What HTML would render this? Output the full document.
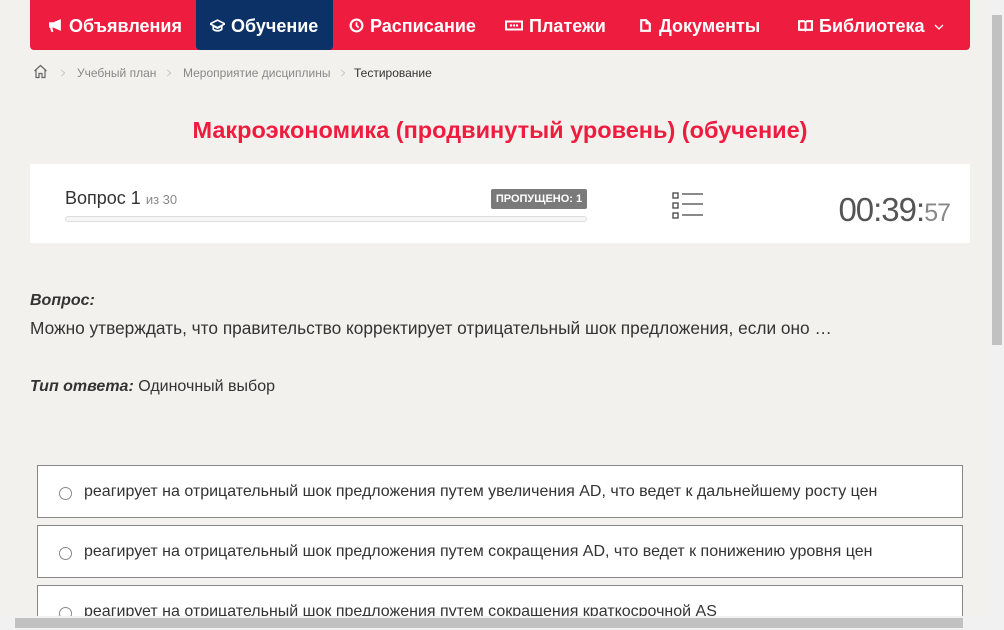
<!DOCTYPE html>
<html><head><meta charset="utf-8"><style>
*{margin:0;padding:0;box-sizing:border-box}
html,body{width:1004px;height:630px;overflow:hidden}
body{background:#f2f1ee;font-family:"Liberation Sans",sans-serif;position:relative;color:#333}
.nav{position:absolute;left:30px;top:0;width:940px;height:50px;background:#ee1c3f;border-radius:0 0 4px 4px}
.it{position:absolute;top:0;height:50px;line-height:52px;color:#fff;font-weight:bold;font-size:18px;white-space:nowrap}
.act{background:#0b3166;border-radius:0 0 4px 4px}
.ic{display:inline-block;width:15px;height:15px;margin-right:6px;vertical-align:-1px}
.bc{position:absolute;top:66px;font-size:12px;color:#888}
.ch{position:absolute;top:63px;font-size:17px;color:#bbb;font-family:"DejaVu Sans",sans-serif;font-weight:200}
.t{position:absolute;left:0;width:1000px;top:117px;text-align:center;color:#ee1c3f;font-weight:bold;font-size:23.5px}
.card{position:absolute;left:30px;top:164px;width:940px;height:79px;background:#fff}
.opt{position:absolute;left:37px;width:926px;height:53px;background:#fff;border:1px solid #888;font-size:16px;color:#333}
.opt span{position:absolute;left:46px;top:17px}
.opt i{position:absolute;left:21px;top:21px;width:13px;height:13px;border:1px solid #888;border-radius:50%}
</style></head><body>
<div class="nav">
<div class="it" style="left:18px"><svg class="ic" viewBox="0 0 14 14"><path d="M1 4h4l7-3v11L5 9H4l1 4H3L2 9H1z" fill="#fff"/></svg>Объявления</div>
<div class="it act" style="left:166px;width:137px;padding-left:14px"><svg class="ic" viewBox="0 0 14 14"><path d="M7 2 0 5.5 7 9l7-3.5zM3 7.5v3c2 2 6 2 8 0v-3L7 9.5z" fill="none" stroke="#fff" stroke-width="1.5"/></svg>Обучение</div>
<div class="it" style="left:319px"><svg class="ic" viewBox="0 0 14 14"><circle cx="7" cy="7" r="5.5" fill="none" stroke="#fff" stroke-width="2"/><path d="M7 4v3l2 2" stroke="#fff" stroke-width="1.6" fill="none"/></svg>Расписание</div>
<div class="it" style="left:475px"><svg class="ic" style="width:18px" viewBox="0 0 18 14"><rect x="0" y="2" width="18" height="10" fill="#fff"/><rect x="2" y="4" width="14" height="6" fill="#ee1c3f"/><circle cx="6" cy="7" r="1.2" fill="#fff"/><circle cx="9" cy="7" r="1.2" fill="#fff"/><circle cx="12" cy="7" r="1.2" fill="#fff"/></svg>Платежи</div>
<div class="it" style="left:608px"><svg class="ic" viewBox="0 0 14 14"><path d="M2 1h6l4 4v8H2z" fill="#fff"/><path d="M4 3h3v3h3v5H4z" fill="#ee1c3f"/></svg>Документы</div>
<div class="it" style="left:768px"><svg class="ic" viewBox="0 0 14 14"><path d="M0 2h6l1 1 1-1h6v10H8l-1 1-1-1H0z" fill="#fff"/><path d="M2 4h4v6H2zM8 4h4v6H8z" fill="#ee1c3f"/></svg>Библиотека <svg width="10" height="8" viewBox="0 0 10 8" style="margin-left:4px;vertical-align:1px"><path d="M1 2l4 4 4-4" fill="none" stroke="#fff" stroke-width="1.3"/></svg></div>
</div>
<svg style="position:absolute;left:33px;top:64px" width="15" height="15" viewBox="0 0 15 15"><path d="M1.5 7 7.5 1.5 13.5 7M3 6v7.5h3v-4h3v4h3V6" fill="none" stroke="#666" stroke-width="1.2"/></svg>
<div class="ch" style="left:60px">›</div><div class="bc" style="left:77px">Учебный план</div>
<div class="ch" style="left:166px">›</div><div class="bc" style="left:183px">Мероприятие дисциплины</div>
<div class="ch" style="left:340px">›</div><div class="bc" style="left:354px;color:#333">Тестирование</div>
<div class="t">Макроэкономика (продвинутый уровень) (обучение)</div>
<div class="card">
<div style="position:absolute;left:35px;top:24px;font-size:18px;color:#333">Вопрос 1 <span style="font-size:13px;color:#888">из 30</span></div>
<div style="position:absolute;left:461px;top:25px;width:96px;height:20px;background:#7a7a7a;color:#fff;font-size:11px;font-weight:bold;line-height:20px;text-align:center;border-radius:2px">ПРОПУЩЕНО: 1</div>
<div style="position:absolute;left:35px;top:52px;width:522px;height:6px;border:1px solid #ddd;border-radius:3px;background:#f6f6f6"></div>
<svg style="position:absolute;left:642px;top:28px" width="32" height="28" viewBox="0 0 32 28"><g fill="none" stroke="#444" stroke-width="1.3"><rect x="1" y="1" width="5" height="5"/><rect x="1" y="11" width="5" height="5"/><rect x="1" y="21" width="5" height="5"/><path d="M10 2h21M10 12h21M10 23h21"/></g></svg>
<div style="position:absolute;right:20px;top:27px;font-size:33px;color:#555;letter-spacing:-1px">00:39:<span style="font-size:25px;color:#888">57</span></div>
</div>
<div style="position:absolute;left:30px;top:292px;font-size:16px;font-weight:bold;font-style:italic">Вопрос:</div>
<div style="position:absolute;left:30px;top:318px;font-size:17.3px">Можно утверждать, что правительство корректирует отрицательный шок предложения, если оно …</div>
<div style="position:absolute;left:30px;top:378px;font-size:16px"><b><i>Тип ответа:</i></b> Одиночный выбор</div>
<div class="opt" style="top:465px"><i></i><span>реагирует на отрицательный шок предложения путем увеличения AD, что ведет к дальнейшему росту цен</span></div>
<div class="opt" style="top:525px"><i></i><span>реагирует на отрицательный шок предложения путем сокращения AD, что ведет к понижению уровня цен</span></div>
<div class="opt" style="top:585px"><i></i><span>реагирует на отрицательный шок предложения путем сокращения краткосрочной AS</span></div>
<div style="position:absolute;left:990px;top:0;width:14px;height:630px;background:#f1f1f1"></div>
<div style="position:absolute;left:992px;top:15px;width:10px;height:330px;background:#c1c1c1"></div>
<div style="position:absolute;left:0;top:616px;width:1004px;height:14px;background:#f1f1f1"></div>
<div style="position:absolute;left:15px;top:618px;width:948px;height:10px;background:#c1c1c1"></div>
</body></html>
